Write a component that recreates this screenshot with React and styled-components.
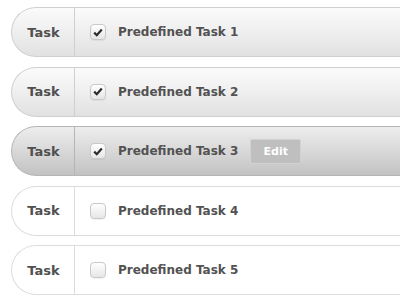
import React from 'react';
import styled, { createGlobalStyle } from 'styled-components';

const GlobalStyle = createGlobalStyle`
  body {
    margin: 0;
    background: #fff;
    overflow: hidden;
    font-family: "DejaVu Sans", Verdana, sans-serif;
  }
`;

const tasks = [
  { id: 1, checked: true, tone: 'grey' },
  { id: 2, checked: true, tone: 'grey' },
  { id: 3, checked: true, tone: 'active', edit: true },
  { id: 4, checked: false, tone: 'plain' },
  { id: 5, checked: false, tone: 'plain' },
];

const backgrounds = {
  grey: 'linear-gradient(to bottom, #fbfbfb 0%, #ececec 60%, #e1e1e1 100%)',
  active: 'linear-gradient(to bottom, #ededed 0%, #d6d6d6 55%, #c2c2c2 100%)',
  plain: '#fff',
};

const borders = {
  grey: '#cfcfcf',
  active: '#b5b5b5',
  plain: '#dcdcdc',
};

const List = styled.div`
  display: flex;
  flex-direction: column;
  gap: 9.5px;
  padding: 7px 0 0 11px;
`;

const Row = styled.div`
  display: flex;
  align-items: stretch;
  height: 48px;
  border: 1px solid ${p => borders[p.$tone]};
  border-right: none;
  border-radius: 25px 0 0 25px;
  background: ${p => backgrounds[p.$tone]};
  color: #505050;
  font-weight: bold;
  font-size: 12px;
`;

const Label = styled.div`
  width: 61px;
  flex: none;
  display: flex;
  align-items: center;
  justify-content: center;
  padding-left: 1px;
  font-size: 13px;
  border-right: 1px solid ${p => borders[p.$tone]};
`;

const Body = styled.div`
  display: flex;
  align-items: center;
  padding-left: 15px;
`;

const Check = styled.span`
  width: 14px;
  height: 14px;
  border: 1px solid #c9c9c9;
  border-radius: 4px;
  background: linear-gradient(to bottom, #ffffff, #e6e6e6);
  box-shadow: 0 1px 1px rgba(0, 0, 0, 0.06);
  display: flex;
  align-items: center;
  justify-content: center;
  margin-right: 12px;
`;

const Title = styled.span`
  color: #525252;
`;

const EditButton = styled.span`
  margin-left: 12px;
  width: 51px;
  height: 25px;
  box-sizing: border-box;
  border: 1px solid #d2d2d2;
  border-radius: 2px;
  background: #bfbfbf;
  color: #fff;
  font-size: 11px;
  display: flex;
  align-items: center;
  justify-content: center;
`;

function Tick() {
  return (
    <svg width="10" height="9" viewBox="0 0 10 9">
      <path d="M1.2 4.6 L3.8 7.2 L8.8 1.6" fill="none" stroke="#2b2b2b" strokeWidth="2.2" />
    </svg>
  );
}

export default function App() {
  return (
    <>
      <GlobalStyle />
      <List>
        {tasks.map(t => (
          <Row key={t.id} $tone={t.tone}>
            <Label $tone={t.tone}>Task</Label>
            <Body>
              <Check>{t.checked && <Tick />}</Check>
              <Title>Predefined Task {t.id}</Title>
              {t.edit && <EditButton>Edit</EditButton>}
            </Body>
          </Row>
        ))}
      </List>
    </>
  );
}
